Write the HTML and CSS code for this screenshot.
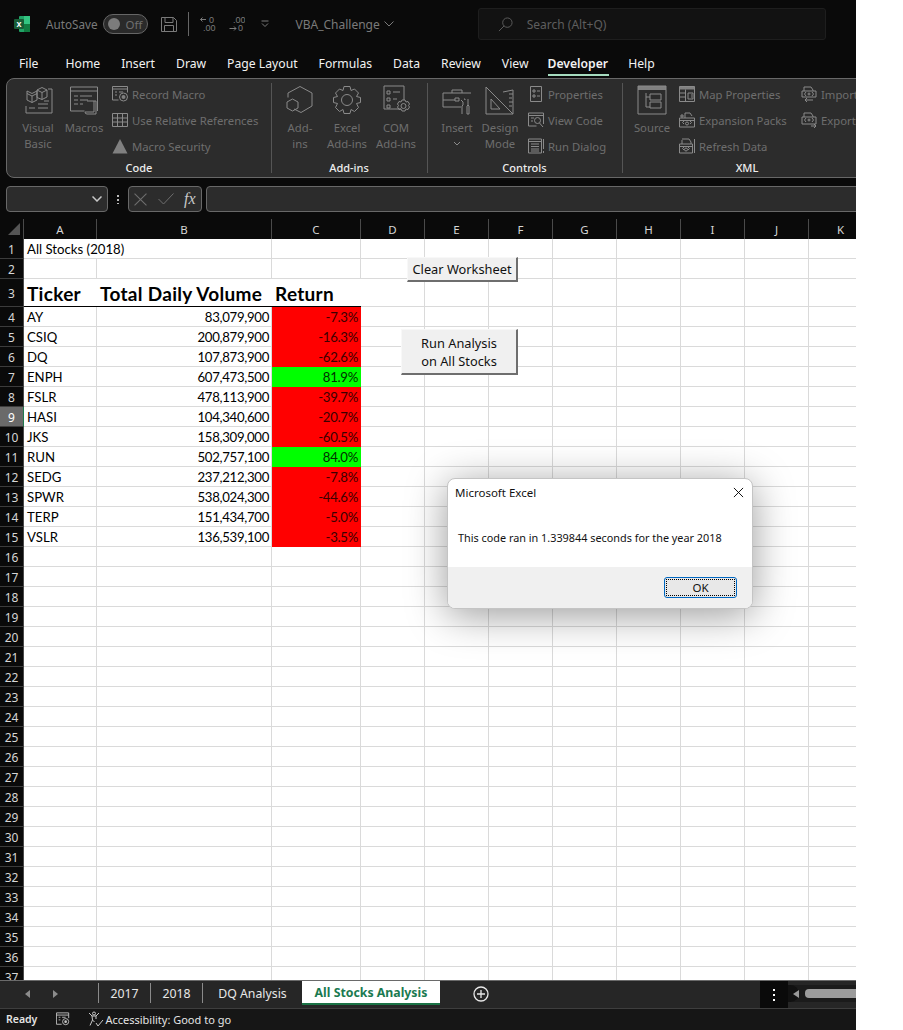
FILE: index.html
```html
<!DOCTYPE html>
<html lang="en">
<head>
    <meta charset="UTF-8">
    <meta name="viewport" content="width=device-width, initial-scale=1.0">
    <title>VBA_Challenge - Excel</title>
    <link rel="stylesheet" href="styles.css">
</head>
<body>
<div class="app">
    <div class="titlebar">
        <svg class="xl-logo" viewBox="0 0 16 16"><rect x="5" width="11" height="16" rx="1" fill="#21a366"/><rect x="10" width="6" height="8" fill="#33c481"/><rect x="10" y="8" width="6" height="8" fill="#107c41"/><rect y="3" width="10" height="10" rx="1" fill="#185c37"/><text x="5" y="11" class="xl-x">x</text></svg>
        <span class="autosave">AutoSave</span>
        <span class="toggle"><i></i>Off</span>
        <svg class="qa save" viewBox="0 0 16 16"><path d="M.5 1.5h12l3 3v11H.5zM4 1.5v5h8v-5M3.500 15.500v-6h9v6"/></svg>
        <span class="qa-sep"></span>
        <svg class="qa dec" viewBox="0 0 16 16"><path d="M6 3.500H.5M2.500 1.500l-2 2 2 2"/><text x="9" y="7" class="dec-t">0</text><text x="3" y="15" class="dec-t">.00</text></svg>
        <svg class="qa dec" viewBox="0 0 16 16"><text x="4" y="7" class="dec-t">.00</text><path d="M.5 12.500H7M5 10.500l2 2-2 2"/><text x="9" y="15" class="dec-t">0</text></svg>
        <svg class="qa more" viewBox="0 0 8 8"><path d="M.5 1h7M1 3.500l3 3 3-3"/></svg>
        <span class="docname">VBA_Challenge</span>
        <svg class="qa chev" viewBox="0 0 10 6"><path d="M.5.5 5 5 9.500.5"/></svg>
        <div class="search">
            <svg class="search-ico" viewBox="0 0 16 16"><circle cx="10" cy="6" r="5"/><path d="M6.500 9.500 1 15"/></svg>
            <span>Search (Alt+Q)</span>
        </div>
    </div>

    <nav class="tabs">
        <span class="file">File</span><span>Home</span><span>Insert</span><span>Draw</span><span>Page Layout</span><span>Formulas</span><span>Data</span><span>Review</span><span>View</span><span class="on">Developer</span><span>Help</span>
    </nav>

    <div class="ribbon">
        <section class="group g-code">
            <div class="tools">
                <div class="big w36">
                    <svg viewBox="0 0 30 30"><path d="M9 8.500l5-2.500v9l-5 2.500-5-2.500v-9zM4 8.500l5 2.500 5-2.500M9 11v6.500M14 5l5-2.500 5 2.500v7l-5 2.500-5-2V5zM14 5l5 2.500 5-2.500M19 7.500v7M25 4h4v24H3v-7M6 23h6M15 23h10M15 19h10M21 16h5"/></svg>
                    <span>Visual<br>Basic</span>
                </div>
                <div class="big w40">
                    <svg viewBox="0 0 30 30"><path d="M1.500 2h27v24M1.500 2v24h14M1.500 6h27M5 11h4M11 11h12M5 15h4M11 15h8M5 19h4M11 19h3M18 16h9v13h-9a2 2 0 0 1-2-2h9V16"/></svg>
                    <span>Macros</span>
                </div>
                <div class="small-col">
                    <div class="small"><svg viewBox="0 0 16 16"><path d="M.5 9V.500h15v6M.5 3h15M3 6h2M7 6h4M3 9h2M.500 9v5h6"/><circle cx="11.500" cy="11" r="4"/><circle class="fill" cx="11.500" cy="11" r="2"/></svg>Record Macro</div>
                    <div class="small"><svg viewBox="0 0 16 16"><path d="M.5 1.500h15v13H.5zM.5 6h15M.5 10h15M5.500 1.500v13M10.500 1.500v13"/></svg>Use Relative References</div>
                    <div class="small"><svg viewBox="0 0 16 16"><path class="fill" d="M8 1 15.500 15.500H.5z"/></svg>Macro Security</div>
                </div>
            </div>
            <h4>Code</h4>
        </section>

        <section class="group g-addins">
            <div class="tools">
                <div class="big w30">
                    <svg viewBox="0 0 30 30"><path d="M15 1.500l12 6.500v13l-11 6.500-7-3.500M3 12.500V8L15 1.500M7.500 14l5.500 3v6l-5.500 3-5.500-3v-6z"/></svg>
                    <span>Add-<br>ins</span>
                </div>
                <div class="big w42">
                    <svg viewBox="0 0 30 30"><path d="M12 1.500h6l1 4 3.500-1.500 4 4-2 3.500 4 1v5l-4 1 2 4-4 4-3.500-2-1 4h-6l-1-4-3.500 2-4-4 2-4-4-1v-5l4-1-2-3.500 4-4L11 5.500z"/><circle cx="15" cy="15" r="5.500"/></svg>
                    <span>Excel<br>Add-ins</span>
                </div>
                <div class="big w42">
                    <svg viewBox="0 0 30 30"><path d="M20 24H3V1h20v14M6 6h3v3H6zM12 7h7M6 13h3v3H6zM12 14h4M6 20h3v3H6zM24 15l1 2 2-.5 1.500 2.500-1 1.500 1 1.500-1.500 2.500-2-.5-1 2h-3l-1-2-2 .5-1.500-2.500 1-1.500-1-1.500 1.500-2.500 2 .5 1-2z"/><circle cx="22.500" cy="21" r="2.500"/></svg>
                    <span>COM<br>Add-ins</span>
                </div>
            </div>
            <h4>Add-ins</h4>
        </section>

        <section class="group g-controls">
            <div class="tools">
                <div class="big w30">
                    <svg viewBox="0 0 30 30"><path d="M19 22H1V8h28M1 15h12M13 13h4v3h-4zM10 8V5h10v3M19 15l2 2v3l-1 1v8M26 14v6l1 1v8h-2v-8l1-1M22 14h1v1"/></svg>
                    <span>Insert<br><svg class="drop" viewBox="0 0 8 5"><path d="M1 1l3 3 3-3"/></svg></span>
                </div>
                <div class="big w36">
                    <svg viewBox="0 0 30 30"><path d="M1 2 28 29H1zM6 14l9 10H6zM18 7l10-2v24M24 9h4M24 13h3M24 17h4M24 21h3"/></svg>
                    <span>Design<br>Mode</span>
                </div>
                <div class="small-col">
                    <div class="small"><svg viewBox="0 0 16 16"><path d="M2.500.5h11v15h-11zM5 4h2v2H5zM9 5h3M5 9h2v2H5zM9 10h3"/></svg>Properties</div>
                    <div class="small"><svg viewBox="0 0 16 16"><path d="M.5 1h15v11M.5 1v13h8M.5 3.500h15M3 6h3M3 9h2"/><circle cx="9.500" cy="8.500" r="3"/><path d="M11.500 11l3.500 4"/></svg>View Code</div>
                    <div class="small"><svg viewBox="0 0 16 16"><path d="M.5 1h13v14H.5zM.5 3.500h13M3 6h8M3 8.500h8M3 11h8M3 13h8M15.500 1v10M15.500 13v2"/></svg>Run Dialog</div>
                </div>
            </div>
            <h4>Controls</h4>
        </section>

        <section class="group g-xml">
            <div class="tools">
                <div class="big w36">
                    <svg viewBox="0 0 30 30"><path class="fill" d="M1 1h28v4H1z"/><path d="M1 1h28v28H1zM9 8v14h4M9 12h4M13 9h11v6H13zM13 17h11v6H13z"/></svg>
                    <span>Source</span>
                </div>
                <div class="small-col xml-a">
                    <div class="small"><svg viewBox="0 0 16 16"><path class="fill" d="M.5.5h15v3H.5z"/><path d="M.5.5h15v15H.5zM6.500 3.500v12M.5 7h6M.5 11h6M9 7h5v6H9zM10.500 9h0M12 9h1M10.500 11h0M12 11h1"/></svg>Map Properties</div>
                    <div class="small"><svg viewBox="0 0 16 16"><path d="M.5 6h15v9H.5zM.5 8.500h15M6 1h5l2 3M6 1v5M1 4h4M3 2v4M5 12l-1.500-1.500L5 9M11 12l1.500-1.500L11 9"/><circle cx="8" cy="11.500" r="1.500"/></svg>Expansion Packs</div>
                    <div class="small"><svg viewBox="0 0 16 16"><path d="M.5 6h13v9H.5zM.5 8.500h13M3 2v4M3 1h7l2 3v2M5 12l-1.500-1.500L5 9M9 12l1.500-1.500L9 9M15.500 1v14"/><circle cx="7" cy="11.500" r="1.500"/></svg>Refresh Data</div>
                </div>
                <div class="small-col xml-b">
                    <div class="small"><svg viewBox="0 0 16 16"><path d="M1 5h14v6H1zM3 5V1h7l2 3v1M5 10 3.500 8 5 6M11 10l1.500-2L11 6M4 14h8M6 12l-2 2 2 2"/><circle cx="8" cy="8" r="1"/></svg>Import</div>
                    <div class="small"><svg viewBox="0 0 16 16"><path d="M1 5h14v7H1zM3 5V1h7l2 3v1M5 10 3.500 8 5 6M11 10l1.500-2L11 6M10 14h5M13 12l2 2-2 2"/><circle cx="8" cy="8" r="1"/></svg>Export</div>
                </div>
            </div>
            <h4>XML</h4>
        </section>
    </div>

    <div class="formula-row">
        <div class="namebox"><svg viewBox="0 0 10 6"><path d="M.5.5 5 5 9.500.5"/></svg></div>
        <span class="vdots"></span>
        <div class="fx-box">
            <svg class="fx-x" viewBox="0 0 12 12"><path d="M.5.5l11 11M11.500.5l-11 11"/></svg>
            <svg class="fx-c" viewBox="0 0 16 12"><path d="M.5 6l5 5L15.500.5"/></svg>
            <i>fx</i>
        </div>
        <div class="formula"></div>
    </div>

    <div class="sheet">
        <table class="grid">
            <colgroup><col class="c0"><col class="ca"><col class="cb"><col class="cc"><col class="cd"><col class="cd"><col class="cd"><col class="cd"><col class="cd"><col class="cd"><col class="cd"><col class="cd"></colgroup>
            <thead>
                <tr><th class="corner"><span></span></th><th>A</th><th>B</th><th>C</th><th>D</th><th>E</th><th>F</th><th>G</th><th>H</th><th>I</th><th>J</th><th>K</th></tr>
            </thead>
            <tbody>
                <tr><th>1</th><td colspan="2">All Stocks (2018)</td><td></td><td></td><td></td><td></td><td></td><td></td><td></td><td></td><td></td></tr>
                <tr><th>2</th><td></td><td></td><td></td><td></td><td></td><td></td><td></td><td></td><td></td><td></td><td></td></tr>
                <tr class="head"><th>3</th><td class="hd">Ticker</td><td class="hd">Total Daily Volume</td><td class="hd">Return</td><td></td><td></td><td></td><td></td><td></td><td></td><td></td><td></td></tr>
                <tr><th>4</th><td>AY</td><td class="num">83,079,900</td><td class="num red">-7.3%</td><td></td><td></td><td></td><td></td><td></td><td></td><td></td><td></td></tr>
                <tr><th>5</th><td>CSIQ</td><td class="num">200,879,900</td><td class="num red">-16.3%</td><td></td><td></td><td></td><td></td><td></td><td></td><td></td><td></td></tr>
                <tr><th>6</th><td>DQ</td><td class="num">107,873,900</td><td class="num red">-62.6%</td><td></td><td></td><td></td><td></td><td></td><td></td><td></td><td></td></tr>
                <tr><th>7</th><td>ENPH</td><td class="num">607,473,500</td><td class="num green">81.9%</td><td></td><td></td><td></td><td></td><td></td><td></td><td></td><td></td></tr>
                <tr><th>8</th><td>FSLR</td><td class="num">478,113,900</td><td class="num red">-39.7%</td><td></td><td></td><td></td><td></td><td></td><td></td><td></td><td></td></tr>
                <tr><th class="sel">9</th><td>HASI</td><td class="num">104,340,600</td><td class="num red">-20.7%</td><td></td><td></td><td></td><td></td><td></td><td></td><td></td><td></td></tr>
                <tr><th>10</th><td>JKS</td><td class="num">158,309,000</td><td class="num red">-60.5%</td><td></td><td></td><td></td><td></td><td></td><td></td><td></td><td></td></tr>
                <tr><th>11</th><td>RUN</td><td class="num">502,757,100</td><td class="num green">84.0%</td><td></td><td></td><td></td><td></td><td></td><td></td><td></td><td></td></tr>
                <tr><th>12</th><td>SEDG</td><td class="num">237,212,300</td><td class="num red">-7.8%</td><td></td><td></td><td></td><td></td><td></td><td></td><td></td><td></td></tr>
                <tr><th>13</th><td>SPWR</td><td class="num">538,024,300</td><td class="num red">-44.6%</td><td></td><td></td><td></td><td></td><td></td><td></td><td></td><td></td></tr>
                <tr><th>14</th><td>TERP</td><td class="num">151,434,700</td><td class="num red">-5.0%</td><td></td><td></td><td></td><td></td><td></td><td></td><td></td><td></td></tr>
                <tr><th>15</th><td>VSLR</td><td class="num">136,539,100</td><td class="num red">-3.5%</td><td></td><td></td><td></td><td></td><td></td><td></td><td></td><td></td></tr>
                <tr><th>16</th><td></td><td></td><td></td><td></td><td></td><td></td><td></td><td></td><td></td><td></td><td></td></tr>
                <tr><th>17</th><td></td><td></td><td></td><td></td><td></td><td></td><td></td><td></td><td></td><td></td><td></td></tr>
                <tr><th>18</th><td></td><td></td><td></td><td></td><td></td><td></td><td></td><td></td><td></td><td></td><td></td></tr>
                <tr><th>19</th><td></td><td></td><td></td><td></td><td></td><td></td><td></td><td></td><td></td><td></td><td></td></tr>
                <tr><th>20</th><td></td><td></td><td></td><td></td><td></td><td></td><td></td><td></td><td></td><td></td><td></td></tr>
                <tr><th>21</th><td></td><td></td><td></td><td></td><td></td><td></td><td></td><td></td><td></td><td></td><td></td></tr>
                <tr><th>22</th><td></td><td></td><td></td><td></td><td></td><td></td><td></td><td></td><td></td><td></td><td></td></tr>
                <tr><th>23</th><td></td><td></td><td></td><td></td><td></td><td></td><td></td><td></td><td></td><td></td><td></td></tr>
                <tr><th>24</th><td></td><td></td><td></td><td></td><td></td><td></td><td></td><td></td><td></td><td></td><td></td></tr>
                <tr><th>25</th><td></td><td></td><td></td><td></td><td></td><td></td><td></td><td></td><td></td><td></td><td></td></tr>
                <tr><th>26</th><td></td><td></td><td></td><td></td><td></td><td></td><td></td><td></td><td></td><td></td><td></td></tr>
                <tr><th>27</th><td></td><td></td><td></td><td></td><td></td><td></td><td></td><td></td><td></td><td></td><td></td></tr>
                <tr><th>28</th><td></td><td></td><td></td><td></td><td></td><td></td><td></td><td></td><td></td><td></td><td></td></tr>
                <tr><th>29</th><td></td><td></td><td></td><td></td><td></td><td></td><td></td><td></td><td></td><td></td><td></td></tr>
                <tr><th>30</th><td></td><td></td><td></td><td></td><td></td><td></td><td></td><td></td><td></td><td></td><td></td></tr>
                <tr><th>31</th><td></td><td></td><td></td><td></td><td></td><td></td><td></td><td></td><td></td><td></td><td></td></tr>
                <tr><th>32</th><td></td><td></td><td></td><td></td><td></td><td></td><td></td><td></td><td></td><td></td><td></td></tr>
                <tr><th>33</th><td></td><td></td><td></td><td></td><td></td><td></td><td></td><td></td><td></td><td></td><td></td></tr>
                <tr><th>34</th><td></td><td></td><td></td><td></td><td></td><td></td><td></td><td></td><td></td><td></td><td></td></tr>
                <tr><th>35</th><td></td><td></td><td></td><td></td><td></td><td></td><td></td><td></td><td></td><td></td><td></td></tr>
                <tr><th>36</th><td></td><td></td><td></td><td></td><td></td><td></td><td></td><td></td><td></td><td></td><td></td></tr>
                <tr><th>37</th><td></td><td></td><td></td><td></td><td></td><td></td><td></td><td></td><td></td><td></td><td></td></tr>
            </tbody>
        </table>

        <button class="sheet-btn clear-btn">Clear Worksheet</button>
        <button class="sheet-btn run-btn">Run Analysis<br>on All Stocks</button>

        <div class="dialog">
            <div class="dialog-title">Microsoft Excel
                <svg viewBox="0 0 12 12"><path d="M1 1l10 10M11 1 1 11"/></svg>
            </div>
            <p class="dialog-msg">This code ran in 1.339844 seconds for the year 2018</p>
            <div class="dialog-foot">
                <button class="ok-btn"><span>OK</span></button>
            </div>
        </div>
    </div>

    <div class="sheetbar">
        <svg class="nav prev" viewBox="0 0 6 8"><path d="M5 0v8L0 4z"/></svg>
        <svg class="nav next" viewBox="0 0 6 8"><path d="M1 0v8l5-4z"/></svg>
        <div class="sheet-tabs">
            <span class="sheet-tab">2017</span>
            <span class="sheet-tab">2018</span>
            <span class="sheet-tab dq">DQ Analysis</span>
            <span class="sheet-tab active">All Stocks Analysis</span>
        </div>
        <svg class="add-sheet" viewBox="0 0 16 16"><circle cx="8" cy="8" r="7"/><path d="M8 4v8M4 8h8"/></svg>
        <div class="bar-dots"><i></i><i></i><i></i></div>
        <div class="hscroll">
            <span class="hscroll-arrow"><svg viewBox="0 0 6 8"><path d="M6 0v8L0 4z"/></svg></span>
            <span class="hscroll-thumb"></span>
        </div>
    </div>

    <div class="status">
        <span class="ready">Ready</span>
        <svg class="st-macro" viewBox="0 0 16 16"><path d="M.5 9V1h14v6M.5 3.500h14M3 6h2M7 6h4M3 9h2M.5 9v5h6"/><circle cx="11" cy="11" r="3.500"/><circle class="dot" cx="11" cy="11" r="1.500"/></svg>
        <svg class="st-acc" viewBox="0 0 16 16"><circle cx="6" cy="2.500" r="1.500"/><path d="M1 2l3 3h4l3-3M4 5l.5 4L2 14.500M8 5v3M4.500 9l2 2M8 12l2 3 5-6"/></svg>
        <span class="acc">Accessibility: Good to go</span>
    </div>
</div>
</body>
</html>
```

FILE: styles.css
```css
html, body {
    margin: 0;
    background: #fff;
}
.app {
    width: 856px;
    height: 1030px;
    overflow: hidden;
    display: flex;
    flex-direction: column;
    background: #0a0a0a;
    font-family: "Noto Sans", "Open Sans", sans-serif;
    font-size: 12px;
}
svg {
    display: block;
    fill: none;
    stroke: currentColor;
    stroke-width: 1;
}

/* title bar */
.titlebar {
    height: 48px;
    flex: none;
    display: flex;
    align-items: center;
    color: #7a7a7a;
}
.xl-logo {
    width: 16px;
    height: 16px;
    margin-left: 14px;
    stroke: none;
}
.xl-x {
    font: bold 9px "Liberation Sans", sans-serif;
    fill: #fff;
    text-anchor: middle;
}
.autosave {
    margin-left: 16px;
    font-size: 11.700px;
}
.toggle {
    margin-left: 6px;
    width: 45px;
    height: 20px;
    box-sizing: border-box;
    border: 1px solid #666;
    border-radius: 10px;
    background: #2a2a2a;
    display: flex;
    align-items: center;
    gap: 5px;
    padding-left: 4px;
    font-size: 11.500px;
    color: #6f6f6f;
}
.toggle i {
    width: 12px;
    height: 12px;
    border-radius: 50%;
    background: #7c7c7c;
}
.qa {
    flex: none;
    color: #7a7a7a;
}
.save {
    width: 16px;
    height: 16px;
    margin-left: 13px;
}
.qa-sep {
    width: 1px;
    height: 24px;
    margin-left: 11px;
    background: #666;
}
.dec {
    width: 16px;
    height: 16px;
    margin-left: 11px;
}
.dec + .dec {
    margin-left: 13px;
}
.dec-t {
    font: 9px "Liberation Sans", sans-serif;
    fill: #7a7a7a;
    stroke: none;
}
.more {
    width: 8px;
    height: 8px;
    margin-left: 16px;
}
.docname {
    margin-left: 26px;
    font-size: 12px;
}
.chev {
    width: 10px;
    height: 6px;
    margin-left: 4px;
}
.search {
    margin-left: 84px;
    width: 348px;
    height: 32px;
    flex: none;
    box-sizing: border-box;
    display: flex;
    align-items: center;
    background: #121212;
    border: 1px solid #1e1e1e;
    border-radius: 3px;
    color: #5e5e5e;
    font-size: 12px;
}
.search-ico {
    width: 15px;
    height: 15px;
    margin: 0 14px 0 19px;
}

/* tabs */
.tabs {
    height: 30px;
    flex: none;
    display: flex;
    align-items: center;
    gap: 21px;
    padding-left: 19px;
    color: #f2f2f2;
    font-size: 12.200px;
}
.tabs .file {
    margin-right: 6px;
}
.tabs .on {
    position: relative;
    margin: 0 -1px 0 -2px;
    font-weight: 600;
}
.tabs .on::after {
    content: "";
    position: absolute;
    left: 0;
    right: -1px;
    bottom: -4px;
    height: 2px;
    background: #a6dcbf;
}

/* ribbon */
.ribbon {
    flex: none;
    width: 900px;
    height: 100px;
    margin-left: 6px;
    box-sizing: border-box;
    display: flex;
    background: #2c2c2c;
    border: 1px solid #686868;
    border-radius: 8px 0 0 8px;
    color: #6e6e6e;
}
.group {
    flex: none;
    position: relative;
    display: flex;
    flex-direction: column;
    margin: 4px 0;
}
.group + .group::before {
    content: "";
    position: absolute;
    left: 0;
    top: 0;
    bottom: 0;
    width: 1px;
    background: #555;
}
.g-code { width: 264px; }
.g-addins { width: 156px; }
.g-controls { width: 195px; }
.g-xml { width: 250px; }
.tools {
    flex: 1;
    display: flex;
    gap: 8px;
    padding-left: 13px;
}
.g-addins .tools { gap: 7px; padding-left: 14px; }
.g-addins .big:first-child { margin-right: 4px; }
.g-controls .tools { gap: 10px; padding-left: 15px; }
.g-xml .tools { gap: 9px; padding-left: 12px; }
.group h4 {
    margin: 0 0 -3px;
    height: 16px;
    line-height: 15px;
    text-align: center;
    font-size: 11px;
    font-weight: 500;
    color: #ececec;
}
.big {
    display: flex;
    flex-direction: column;
    align-items: center;
    text-align: center;
    font-size: 11.300px;
    line-height: 16px;
    white-space: nowrap;
}
.big svg {
    width: 30px;
    height: 30px;
    margin: 2px 0 5px;
    color: #8a8a8a;
    flex: none;
}
.big .drop {
    width: 8px;
    height: 5px;
    margin: 5px auto 0;
}
.w30 { width: 30px; }
.w36 { width: 36px; }
.w40 { width: 40px; }
.w42 { width: 42px; }
.small-col {
    display: flex;
    flex-direction: column;
    gap: 10px;
    padding-top: 3px;
}
.small {
    display: flex;
    align-items: center;
    gap: 4px;
    height: 16px;
    font-size: 11.300px;
    white-space: nowrap;
}
.small svg {
    width: 16px;
    height: 16px;
    flex: none;
    color: #8a8a8a;
}
.fill {
    fill: #808080;
    stroke: none;
}
.xml-a { width: 113px; }

/* formula bar */
.formula-row {
    flex: none;
    height: 26px;
    margin: 8px 0 7px 6px;
    display: flex;
}
.namebox, .fx-box, .formula {
    box-sizing: border-box;
    flex: none;
    height: 26px;
    background: #2c2c2c;
    border: 1px solid #686868;
    border-radius: 4px;
}
.namebox {
    width: 102px;
    display: flex;
    align-items: center;
    justify-content: flex-end;
    padding-right: 5px;
    color: #c8c8c8;
}
.namebox svg {
    width: 10px;
    height: 6px;
    stroke-width: 1.500;
}
.vdots {
    flex: none;
    width: 2px;
    height: 10px;
    margin: 8px 9px 0 9px;
    background: radial-gradient(circle, #bbb 1px, transparent 1px) 0 0 / 2px 4px;
}
.fx-box {
    width: 74px;
    display: flex;
    align-items: center;
    color: #6e6e6e;
}
.fx-x {
    width: 13px;
    height: 13px;
    margin-left: 5px;
}
.fx-c {
    width: 16px;
    height: 12px;
    margin-left: 11px;
}
.fx-box i {
    margin-left: 10px;
    font: italic 16px "Liberation Serif", serif;
    color: #c8c8c8;
}
.formula {
    width: 680px;
    margin-left: 4px;
}

/* sheet */
.sheet {
    flex: 1;
    min-height: 0;
    position: relative;
    overflow: hidden;
    background: #fff;
}
.grid {
    table-layout: fixed;
    width: 873px;
    border-collapse: separate;
    border-spacing: 0;
    font-family: Lato, "Open Sans", sans-serif;
    font-size: 13.200px;
    color: #000;
}
.c0 { width: 24px; }
.ca { width: 73px; }
.cb { width: 175px; }
.cc { width: 89px; }
.cd { width: 64px; }
.grid th, .grid td {
    height: 20px;
    padding: 0;
    box-sizing: border-box;
    overflow: hidden;
    white-space: nowrap;
}
.grid th {
    background: #0a0a0a;
    color: #d6d6d6;
    font-family: "Noto Sans", sans-serif;
    font-size: 12px;
    font-weight: 400;
    text-align: center;
    border-right: 1px solid #4a4a4a;
    border-bottom: 1px solid #3c3c3c;
    padding-top: 1px;
}
.grid thead th {
    font-size: 11.500px;
    border-bottom: 0;
    padding-top: 0;
}
.grid tbody th.sel {
    background: #6a6a6a;
    color: #fff;
    border-right: 1px solid #1f7a4d;
}
.corner {
    position: relative;
}
.corner span {
    position: absolute;
    left: 8px;
    top: 4px;
    border-style: solid;
    border-width: 0 0 12px 12px;
    border-color: transparent transparent #555 transparent;
}
.grid td {
    padding: 1px 3px 0;
    border-right: 1px solid #dadada;
    border-bottom: 1px solid #dadada;
}
.grid .head th, .grid .head td {
    height: 28px;
}
.grid td.hd {
    padding-top: 2px;
    font-size: 19px;
    font-weight: 700;
    letter-spacing: .3px;
    color: #000;
    border-right: 0;
    border-bottom: 1px solid #000;
}
.grid td.num {
    text-align: right;
    padding-right: 2px;
    letter-spacing: -.3px;
}
.grid td.red {
    background: #f00;
    color: #3a0000;
    border-color: #f00;
}
.grid td.green {
    background: #0f0;
    color: #003000;
    border-color: #0f0;
}

/* sheet form buttons */
.sheet-btn {
    position: absolute;
    box-sizing: border-box;
    padding: 1px 0 0;
    background: #f0f0f0;
    border: 1px solid #f8f8f8;
    border-right: 2px solid #6e6e6e;
    border-bottom: 2px solid #6e6e6e;
    font-family: "Noto Sans", sans-serif;
    font-size: 12.800px;
    line-height: 18px;
    color: #111;
}
.clear-btn {
    left: 407px;
    top: 38px;
    width: 111px;
    height: 25px;
    padding-top: 0;
}
.run-btn {
    left: 401px;
    top: 110px;
    width: 117px;
    height: 46px;
}

/* message box */
.dialog {
    position: absolute;
    left: 447px;
    top: 259px;
    width: 306px;
    height: 131px;
    display: flex;
    flex-direction: column;
    box-sizing: border-box;
    background: #fff;
    border: 1px solid #c4c4c4;
    border-radius: 8px;
    overflow: hidden;
    color: #111;
    box-shadow: 0 6px 40px rgba(0, 0, 0, .4);
}
.dialog-title {
    height: 26px;
    flex: none;
    display: flex;
    align-items: center;
    justify-content: space-between;
    padding: 0 8px 0 7px;
    font-size: 11.500px;
}
.dialog-title svg {
    width: 11px;
    height: 11px;
    color: #000;
}
.dialog-msg {
    flex: 1;
    margin: 0;
    padding: 26px 0 0 10px;
    font-size: 10.850px;
    line-height: 14px;
    white-space: nowrap;
}
.dialog-foot {
    flex: none;
    height: 41px;
    display: flex;
    justify-content: flex-end;
    align-items: center;
    padding-right: 15px;
    background: #f0f0f0;
}
.ok-btn {
    width: 73px;
    height: 21px;
    padding: 1px;
    box-sizing: border-box;
    background: #e8e8e8;
    border: 1px solid #0067c0;
    border-radius: 3px;
    font-family: "Noto Sans", sans-serif;
    font-size: 11.500px;
    color: #111;
}
.ok-btn span {
    display: block;
    height: 100%;
    line-height: 15px;
    box-sizing: border-box;
    border: 1px dotted #000;
}

/* sheet tab bar */
.sheetbar {
    flex: none;
    height: 28px;
    box-sizing: border-box;
    display: flex;
    background: #262626;
    border-top: 1px solid #6a6a6a;
    position: relative;
}
.nav {
    width: 6px;
    height: 8px;
    margin-top: 9px;
    stroke: none;
    fill: #8c8c8c;
}
.prev { margin-left: 25px; }
.next { margin-left: 21px; }
.sheet-tabs {
    display: flex;
    margin-left: 40px;
    height: 24px;
    color: #e8e8e8;
    font-size: 12.300px;
    align-items: center;
}
.sheet-tab {
    box-sizing: border-box;
    height: 20px;
    line-height: 21px;
    width: 52px;
    text-align: center;
    border-left: 1px solid #8a8a8a;
}
.sheet-tab.dq {
    width: 100px;
}
.sheet-tab.active {
    height: 24px;
    width: 138px;
    line-height: 23px;
    background: #fff;
    color: #1a7a50;
    font-weight: 700;
    border: 0;
    border-bottom: 2px solid #1a7245;
    align-self: flex-start;
}
.add-sheet {
    position: absolute;
    left: 473px;
    top: 5px;
    width: 16px;
    height: 16px;
    color: #e8e8e8;
    stroke-width: 1.300;
}
.bar-dots {
    position: absolute;
    left: 760px;
    top: 0;
    bottom: 0;
    width: 28px;
    background: #0a0a0a;
    display: flex;
    flex-direction: column;
    align-items: center;
    justify-content: center;
    gap: 3px;
}
.bar-dots i {
    width: 2px;
    height: 2px;
    background: #fff;
}
.hscroll {
    position: absolute;
    left: 788px;
    top: 4px;
    width: 68px;
    height: 17px;
    background: #1b1b1b;
    display: flex;
    align-items: center;
}
.hscroll-arrow {
    width: 11px;
    height: 17px;
    display: flex;
    align-items: center;
    justify-content: flex-end;
    background: #111;
    border-radius: 0 9px 9px 0;
}
.hscroll-arrow svg {
    width: 6px;
    height: 8px;
    stroke: none;
    fill: #9a9a9a;
}
.hscroll-thumb {
    margin-left: 6px;
    flex: 1;
    height: 9px;
    background: #9c9c9c;
    border-radius: 4px 0 0 4px;
}

/* status bar */
.status {
    flex: none;
    height: 22px;
    box-sizing: border-box;
    display: flex;
    align-items: center;
    padding-bottom: 1px;
    background: #161616;
    border-top: 1px solid #3e3e3e;
    color: #e4e4e4;
    font-size: 11px;
}
.ready {
    margin-left: 6px;
    font-weight: 600;
    font-size: 10.500px;
}
.st-macro {
    width: 14px;
    height: 14px;
    margin-left: 19px;
    color: #c8c8c8;
}
.dot {
    fill: #c8c8c8;
    stroke: none;
}
.st-acc {
    width: 16px;
    height: 16px;
    margin-left: 18px;
    color: #c8c8c8;
}
.acc {
    margin-left: 1px;
    font-size: 11px;
}
```
